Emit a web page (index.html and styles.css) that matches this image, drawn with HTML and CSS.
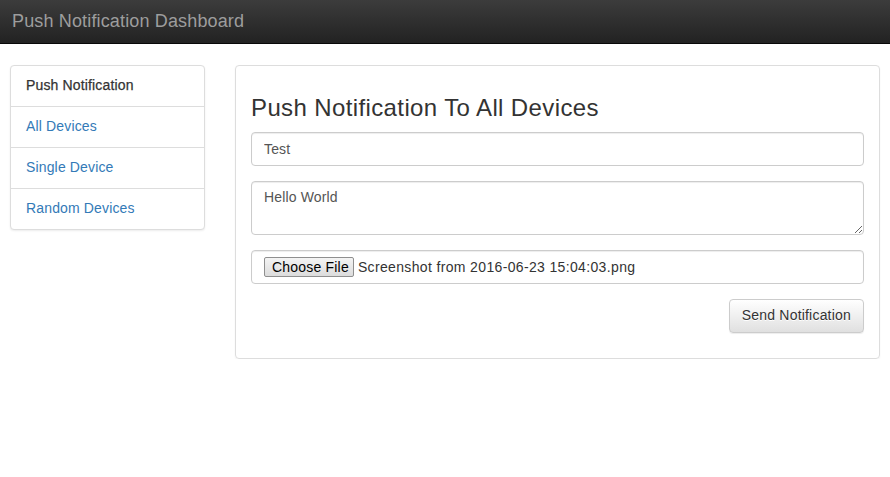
FILE: index.html
```html
<!DOCTYPE html>
<html>
<head>
<meta charset="utf-8">
<title>Push Notification Dashboard</title>
<link rel="stylesheet" href="styles.css">
</head>
<body>
<nav class="navbar">
  <span class="brand">Push Notification Dashboard</span>
</nav>
<div class="container">
  <aside class="sidebar">
    <div class="list-group">
      <div class="list-item active-item">Push Notification</div>
      <a class="list-item" href="#">All Devices</a>
      <a class="list-item" href="#">Single Device</a>
      <a class="list-item" href="#">Random Devices</a>
    </div>
  </aside>
  <main class="panel">
    <h3 class="title">Push Notification To All Devices</h3>
    <form class="form">
      <div class="form-group"><input class="form-control" type="text" value="Test"></div>
      <div class="form-group"><textarea class="form-control textarea" rows="2">Hello World</textarea></div>
      <div class="form-group">
        <div class="form-control file-control"><span class="file-btn">Choose File</span><span class="file-name">Screenshot from 2016-06-23 15:04:03.png</span></div>
      </div>
      <div class="actions"><button class="btn" type="button">Send Notification</button></div>
    </form>
  </main>
</div>
</body>
</html>
```
FILE: styles.css
```css
* { box-sizing: border-box; }
html, body { margin: 0; padding: 0; }
body {
  font-family: "Liberation Sans", Arial, Helvetica, sans-serif;
  font-size: 14px;
  line-height: 20px;
  color: #333;
  background: #fff;
  letter-spacing: 0.15px;
}
.navbar {
  height: 44px;
  background: linear-gradient(to bottom, #3c3c3c 0%, #222 100%);
  border-bottom: 1px solid #080808;
  padding: 0 12px;
  display: flex;
  align-items: center;
}
.brand {
  color: #9d9d9d;
  font-size: 18px;
  line-height: 20px;
  margin-top: -2px;
}
.container {
  display: flex;
  align-items: flex-start;
  gap: 30px;
  padding: 21px 10px 0 10px;
}
.sidebar { width: 195px; flex: none; }
.list-group {
  border: 1px solid #ddd;
  border-radius: 4px;
  box-shadow: 0 1px 2px rgba(0,0,0,.075);
  background: #fff;
}
.list-item {
  display: block;
  padding: 9px 15px 11px 15px;
  border-top: 1px solid #ddd;
  color: #337ab7;
  text-decoration: none;
}
.list-item:first-child { border-top: none; }
.active-item { color: #333; -webkit-text-stroke: 0.25px #333; }
.panel {
  flex: 1;
  border: 1px solid #ddd;
  border-radius: 4px;
  box-shadow: 0 1px 2px rgba(0,0,0,.05);
  padding: 15px 15px 25px 15px;
}
.title {
  font-size: 24px;
  font-weight: 500;
  line-height: 26px;
  margin: 14px 0 11px 0;
  color: #333;
  letter-spacing: 0.38px;
}
.form-group { margin-bottom: 15px; }
.form-control {
  display: block;
  width: 100%;
  height: 34px;
  padding: 6px 12px;
  font-family: inherit;
  font-size: 14px;
  line-height: 20px;
  letter-spacing: 0.15px;
  color: #555;
  background: #fff;
  border: 1px solid #ccc;
  border-radius: 4px;
  box-shadow: inset 0 1px 1px rgba(0,0,0,.075);
}
.textarea { height: 54px; resize: vertical; padding: 5px 12px 7px 12px; }
.file-control {
  display: flex;
  align-items: center;
  padding: 0 12px;
}
.file-btn {
  height: 20px;
  padding: 0 4px 0 7px;
  line-height: 18px;
  font-size: 14px;
  letter-spacing: 0.2px;
  color: #000;
  border: 1px solid #8f8f8f;
  border-radius: 2px;
  background: linear-gradient(to bottom, #f4f4f4, #dcdcdc);
  margin-right: 4px;
  margin-top: -1px;
}
.file-name { color: #333; letter-spacing: 0.35px; }
.actions { display: flex; justify-content: flex-end; }
.btn {
  height: 34px;
  padding: 5px 12px 7px 12px;
  font-family: inherit;
  font-size: 14px;
  line-height: 20px;
  letter-spacing: 0.2px;
  color: #333;
  border: 1px solid #ccc;
  border-radius: 4px;
  background: linear-gradient(to bottom, #fff 0%, #e0e0e0 100%);
  box-shadow: inset 0 1px 0 rgba(255,255,255,.15), 0 1px 1px rgba(0,0,0,.075);
  text-shadow: 0 1px 0 #fff;
}
```
